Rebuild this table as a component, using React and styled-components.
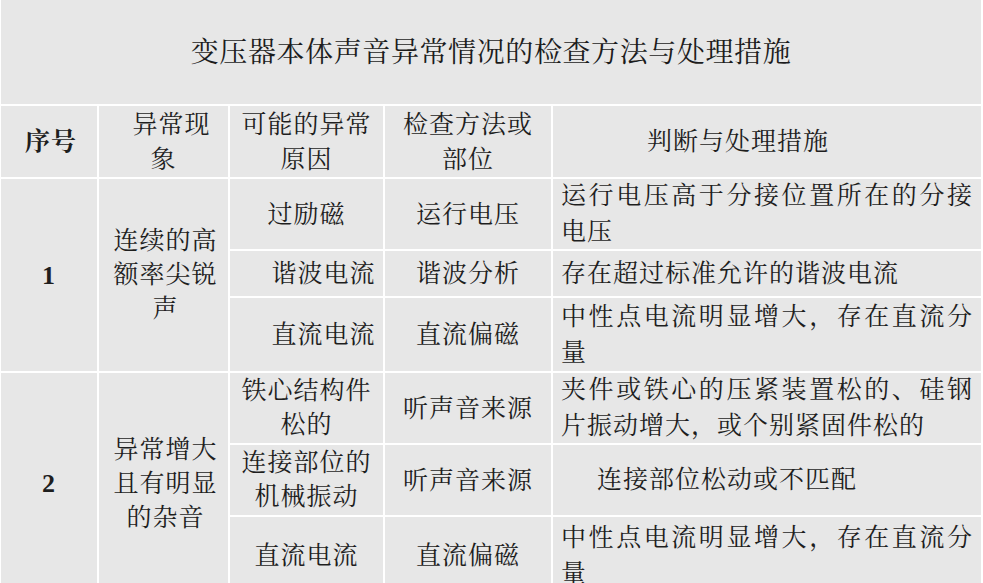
import React from "react";
import styled, { createGlobalStyle } from "styled-components";

const Global = createGlobalStyle`
  html, body { margin: 0; padding: 0; background: #ffffff; overflow: hidden; }
  body { font-family: "Liberation Serif", "Noto Serif CJK SC", "Noto Sans CJK SC", serif; }
`;

const Table = styled.div`
  display: grid;
  grid-template-columns: 96px 129px 153px 166px 428px;
  grid-template-rows: 104px 71px 70px 45px 73px 70px 70px 77px;
  gap: 2px;
  padding: 0 2px 2px 1px;
  width: 983px;
  box-sizing: border-box;
  background: #ffffff;
`;

const Title = styled.div`
  grid-column: 1 / -1;
  background: #e7e7e7;
  display: flex;
  align-items: center;
  justify-content: center;
  font-size: 28px;
  letter-spacing: 0.6px;
  color: #1c1c1c;
  padding-bottom: 4px;
  box-sizing: border-box;
`;

const Cell = styled.div`
  background: #e7e7e7;
  color: #1e1e1e;
  display: flex;
  flex-direction: column;
  justify-content: center;
  align-items: center;
  text-align: center;
  font-size: 25px;
  letter-spacing: 1px;
  line-height: ${(p) => p.$lh || 35}px;
  box-sizing: border-box;
  padding: 0 ${(p) => p.$padR || 6}px 0 ${(p) => p.$padL || 6}px;
  grid-row: ${(p) => (p.$span ? `span ${p.$span}` : "auto")};
  font-weight: ${(p) => (p.$bold ? 700 : 400)};
`;

const Num = styled(Cell)`
  font-family: "Liberation Serif", serif;
  font-weight: 700;
  font-size: 26px;
`;

const TextCell = styled.div`
  background: #e7e7e7;
  color: #1e1e1e;
  display: flex;
  align-items: center;
  font-size: 25px;
  letter-spacing: 1px;
  line-height: 36px;
  padding: 0 8px 0 8px;
  box-sizing: border-box;
  & > p {
    margin: 0;
    width: 100%;
    text-align: justify;
    text-indent: ${(p) => p.$indent || 0}px;
  }
`;

const Line = styled.span`
  display: block;
  padding-left: ${(p) => p.$indent || 0}px;
`;

export default function App() {
  return (
    <>
      <Global />
      <Table>
        <Title>变压器本体声音异常情况的检查方法与处理措施</Title>

        <Cell $bold $padL={10}>序号</Cell>
        <Cell>
          <Line $indent={16}>异常现</Line>
          <Line>象</Line>
        </Cell>
        <Cell>
          <Line>可能的异常</Line>
          <Line>原因</Line>
        </Cell>
        <Cell>
          <Line>检查方法或</Line>
          <Line>部位</Line>
        </Cell>
        <Cell $padR={64}>判断与处理措施</Cell>

        <Num $span={3}>1</Num>
        <Cell $span={3} $padL={10} $lh={34}>
          <Line>连续的高</Line>
          <Line>额率尖锐</Line>
          <Line>声</Line>
        </Cell>
        <Cell>过励磁</Cell>
        <Cell>运行电压</Cell>
        <TextCell>
          <p>运行电压高于分接位置所在的分接电压</p>
        </TextCell>

        <Cell $padL={40}>谐波电流</Cell>
        <Cell>谐波分析</Cell>
        <TextCell>
          <p>存在超过标准允许的谐波电流</p>
        </TextCell>

        <Cell $padL={40}>直流电流</Cell>
        <Cell>直流偏磁</Cell>
        <TextCell>
          <p>中性点电流明显增大，存在直流分量</p>
        </TextCell>

        <Num $span={3}>2</Num>
        <Cell $span={3} $padL={10} $lh={34}>
          <Line>异常增大</Line>
          <Line>且有明显</Line>
          <Line>的杂音</Line>
        </Cell>
        <Cell $lh={34}>
          <Line>铁心结构件</Line>
          <Line>松的</Line>
        </Cell>
        <Cell>听声音来源</Cell>
        <TextCell>
          <p>夹件或铁心的压紧装置松的、硅钢片振动增大，或个别紧固件松的</p>
        </TextCell>

        <Cell $lh={34}>
          <Line>连接部位的</Line>
          <Line>机械振动</Line>
        </Cell>
        <Cell>听声音来源</Cell>
        <TextCell $indent={36}>
          <p>连接部位松动或不匹配</p>
        </TextCell>

        <Cell>直流电流</Cell>
        <Cell>直流偏磁</Cell>
        <TextCell>
          <p>中性点电流明显增大，存在直流分量</p>
        </TextCell>
      </Table>
    </>
  );
}
